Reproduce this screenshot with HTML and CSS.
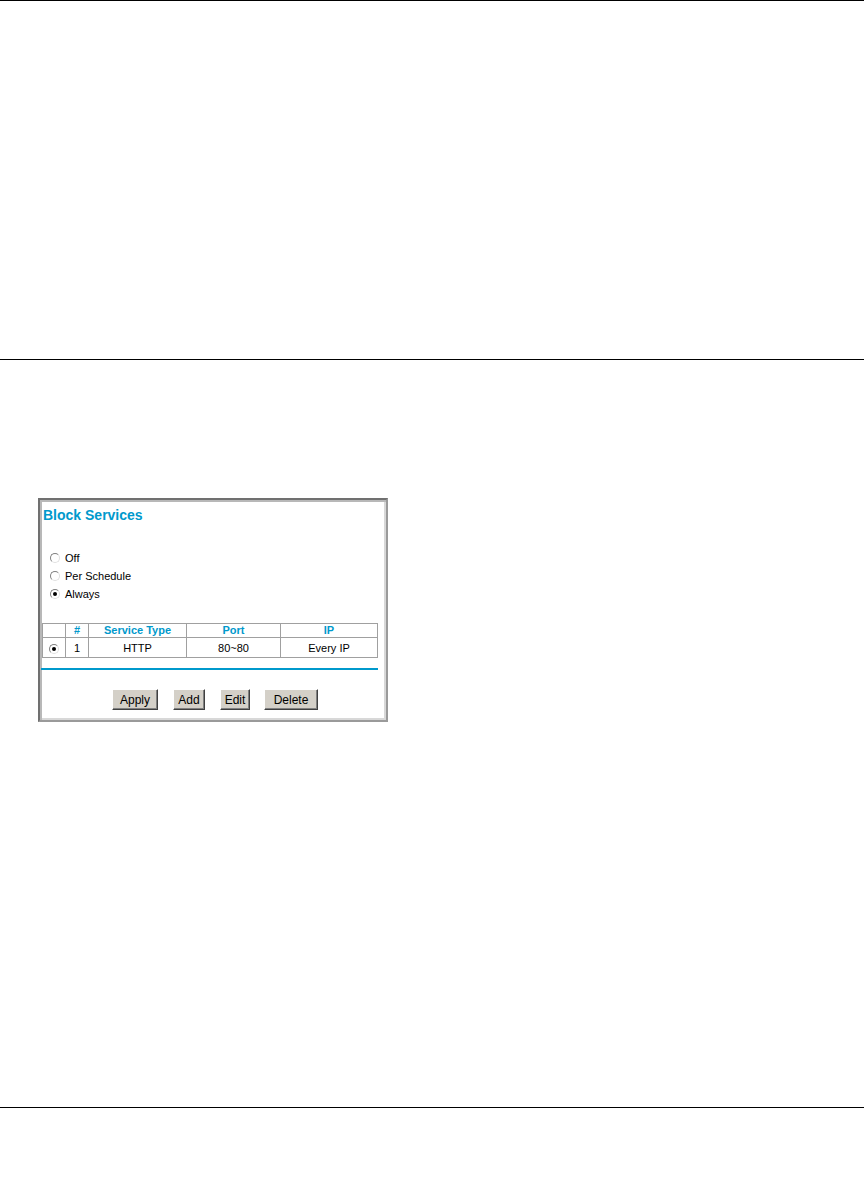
FILE: index.html
```html
<!DOCTYPE html>
<html lang="en">
<head>
    <meta charset="UTF-8">
    <title>Block Services</title>
    <link rel="stylesheet" href="styles.css">
</head>
<body>
    <div class="rule rule-top"></div>
    <div class="rule rule-mid"></div>

    <!-- Screenshot of the router page -->
    <div class="shot">
        <h1 class="shot-title">Block Services</h1>

        <div class="options">
            <div class="option"><span class="radio"></span>Off</div>
            <div class="option"><span class="radio"></span>Per Schedule</div>
            <div class="option"><span class="radio checked"></span>Always</div>
        </div>

        <table class="services">
            <tr>
                <th class="col-sel"></th>
                <th class="col-num">#</th>
                <th class="col-type">Service Type</th>
                <th class="col-port">Port</th>
                <th class="col-ip">IP</th>
            </tr>
            <tr>
                <td><span class="radio checked"></span></td>
                <td>1</td>
                <td>HTTP</td>
                <td>80~80</td>
                <td>Every IP</td>
            </tr>
        </table>

        <div class="blue-line"></div>

        <div class="buttons">
            <button class="btn btn-apply">Apply</button>
            <button class="btn btn-add">Add</button>
            <button class="btn btn-edit">Edit</button>
            <button class="btn btn-delete">Delete</button>
        </div>
    </div>

    <div class="rule rule-bottom"></div>
</body>
</html>
```

FILE: styles.css
```css
/* --- Page --- */
body {
    margin: 0;
    background: #fff;
    font-family: "Liberation Sans", Arial, sans-serif;
}

.rule {
    height: 1px;
    background: #000;
}

.rule-mid {
    margin-top: 358px;
}

.rule-bottom {
    margin-top: 385px;
}

/* --- Screenshot frame --- */
.shot {
    margin: 138px 0 0 38px;
    width: 346px;
    height: 220px;
    padding: 0;
    background: #fff;
    border: 2px solid;
    border-color: #707070 #9a9a9a #9a9a9a #707070;
    box-shadow: inset 2px 2px 0 #b8b8b8, inset -2px -2px 0 #d8d8d8;
}

.shot-title {
    margin: 0;
    padding: 7px 0 0 3px;
    font-size: 14px;
    line-height: 16px;
    font-weight: bold;
    color: #0099cc;
}

/* --- Radio options --- */
.options {
    margin: 26px 0 0 10px;
    font-size: 11px;
    color: #000;
}

.option {
    display: flex;
    align-items: center;
    height: 18px;
}

.radio {
    display: inline-block;
    box-sizing: border-box;
    width: 10px;
    height: 10px;
    margin-right: 5px;
    border-radius: 50%;
    border: 1px solid;
    border-color: #808080 #e0e0e0 #e0e0e0 #808080;
    background: #fff;
    position: relative;
}

.radio.checked::after {
    content: "";
    position: absolute;
    left: 2px;
    top: 2px;
    width: 4px;
    height: 4px;
    border-radius: 50%;
    background: #000;
}

/* --- Services table --- */
.services {
    margin: 20px 0 0 2px;
    border-collapse: collapse;
    font-size: 11px;
}

.services th,
.services td {
    border: 1px solid #a0a0a0;
    padding: 0;
    text-align: center;
}

.services th {
    height: 13px;
    line-height: 13px;
    color: #0099cc;
    font-weight: bold;
}

.services td {
    height: 19px;
}

.col-sel { width: 22px; }
.col-num { width: 22px; }
.col-type { width: 97px; }
.col-port { width: 93px; }
.col-ip { width: 96px; }

.services td .radio {
    margin: 0;
    vertical-align: middle;
}

.blue-line {
    margin: 10px 0 0 1px;
    width: 337px;
    height: 2px;
    background: #0099cc;
}

/* --- Buttons --- */
.buttons {
    display: flex;
    margin: 19px 0 0 72px;
}

.btn {
    box-sizing: border-box;
    height: 21px;
    padding: 0;
    font-family: "Liberation Sans", Arial, sans-serif;
    font-size: 12px;
    color: #000;
    background: #d4d0c8;
    border: 1px solid;
    border-color: #fff #404040 #404040 #fff;
    box-shadow: inset -1px -1px 0 #808080;
}

.btn-apply { width: 46px; }
.btn-add { width: 32px; margin-left: 15px; }
.btn-edit { width: 30px; margin-left: 15px; }
.btn-delete { width: 54px; margin-left: 14px; }
```
